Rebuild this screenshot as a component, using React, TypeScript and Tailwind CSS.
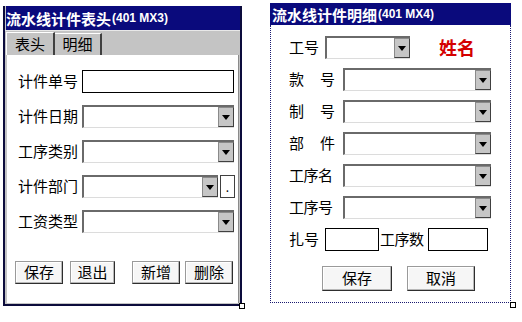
import React from "react"

const cjk = { fontFamily: '"Noto Sans CJK SC", "Noto Sans", sans-serif' }
const latin = { fontFamily: '"Liberation Sans", Arial, sans-serif' }

function Arrow() {
  return (
    <svg width="8" height="5" viewBox="0 0 8 5">
      <polygon points="0,0 8,0 4,5" fill="#000" />
    </svg>
  )
}

function Combo({ className }: { className: string }) {
  return (
    <div
      className={`flex h-[23px] bg-white border-t-2 border-l-2 border-t-[#6a6a6a] border-l-[#6a6a6a] border-b border-b-[#dcdcdc] ${className}`}
    >
      <div className="flex-1" />
      <div className="flex w-[16px] items-center justify-center bg-[#c6c6c6] border border-[#8a8a8a] border-r-[#404040] border-b-[#404040]">
        <Arrow />
      </div>
    </div>
  )
}

function Btn({ label, className }: { label: string; className: string }) {
  return (
    <div
      className={`flex items-center justify-center bg-[#f6f6f6] border border-[#9a9a9a] border-r-[#2e2e2e] border-b-[#2e2e2e] shadow-[inset_-1px_-1px_0_#b8b8b8,inset_1px_1px_0_#ffffff] text-[15px] text-black ${className}`}
    >
      {label}
    </div>
  )
}

function Title({ zh, code }: { zh: string; code: string }) {
  return (
    <div className="flex items-center bg-[#0a0a7c] text-white">
      <span className="text-[15px] font-bold leading-none" style={cjk}>
        {zh}
      </span>
      <span className="ml-[1px] text-[12px] font-bold leading-none" style={latin}>
        {code}
      </span>
    </div>
  )
}

const leftRows = ["计件日期", "工序类别"]

function Handle() {
  return <div className="absolute -right-[5px] -bottom-[5px] h-[6px] w-[6px] border border-black bg-white" />
}

export default function App() {
  return (
    <div className="flex h-[322px] w-[522px] items-start bg-white text-black" style={cjk}>
      {/* 表头 window */}
      <div className="relative ml-[3px] mt-[6px] flex h-[300px] w-[239px] flex-col border-x-2 border-b-2 border-[#0c0c3c] bg-[#c4c4c4]">
        <div className="h-[24px] pl-[1px] [&>div]:h-full">
          <Title zh="流水线计件表头" code="(401 MX3)" />
        </div>
        <div className="flex h-[25px] items-end border-t border-[#e8e8e8] pl-[1px]">
          <div className="flex h-[23px] w-[49px] items-center justify-center border-l border-t border-white border-r-2 border-r-[#404040] bg-[#c4c4c4] text-[15px]">
            表头
          </div>
          <div className="flex h-[22px] w-[47px] items-center justify-center border-t border-white border-r-2 border-r-[#404040] text-[15px]">
            明细
          </div>
        </div>
        <div className="mb-[1px] ml-[2px] mr-[1px] flex flex-1 flex-col border-l border-white border-r border-r-[#8a8a8a] bg-white pl-[10px] pt-[15px]">
          <div className="flex flex-col gap-[12px]">
            <div className="flex h-[23px] items-center">
              <span className="w-[64px] text-[15px]">计件单号</span>
              <div className="h-[23px] w-[152px] border border-black bg-white" />
            </div>
            {leftRows.map((l) => (
              <div key={l} className="flex h-[23px] items-center">
                <span className="w-[64px] text-[15px]">{l}</span>
                <Combo className="w-[152px]" />
              </div>
            ))}
            <div className="flex h-[23px] items-center">
              <span className="w-[64px] text-[15px]">计件部门</span>
              <Combo className="w-[136px]" />
              <div className="ml-[2px] flex h-[23px] w-[15px] items-center justify-center border border-[#404040] bg-white text-[12px] leading-none">
                .
              </div>
            </div>
            <div className="flex h-[23px] items-center">
              <span className="w-[64px] text-[15px]">工资类型</span>
              <Combo className="w-[152px]" />
            </div>
          </div>
          <div className="mt-[28px] flex h-[23px] -ml-[3px]">
            <Btn label="保存" className="w-[48px]" />
            <Btn label="退出" className="ml-[7px] w-[45px]" />
            <Btn label="新增" className="ml-[17px] w-[48px]" />
            <Btn label="删除" className="ml-[5px] w-[48px]" />
          </div>
        </div>
        <Handle />
      </div>

      {/* 明细 window */}
      <div className="relative ml-[28px] mt-[3px] flex h-[300px] w-[241px] flex-col">
        <div className="h-[22px] pl-[2px] bg-[#0a0a7c] [&>div]:h-full">
          <Title zh="流水线计件明细" code="(401 MX4)" />
        </div>
        <div className="flex flex-1 flex-col border-x border-b border-dotted border-[#1a1a70] bg-white pl-[18px] pt-[11px]">
          <div className="flex flex-col gap-[9px]">
            <div className="flex h-[23px] items-center">
              <span className="w-[30px] text-[15px]">工号</span>
              <Combo className="ml-[6px] w-[85px]" />
              <span className="ml-[29px] text-[18px] font-bold text-[#d40000]">姓名</span>
            </div>
            {[
              ["款", "号"],
              ["制", "号"],
              ["部", "件"],
            ].map(([a, b]) => (
              <div key={a} className="flex h-[23px] items-center">
                <span className="flex w-[46px] justify-between text-[15px]">
                  <span>{a}</span>
                  <span>{b}</span>
                </span>
                <Combo className="ml-[8px] w-[148px]" />
              </div>
            ))}
            {["工序名", "工序号"].map((l) => (
              <div key={l} className="flex h-[23px] items-center">
                <span className="w-[46px] text-[15px] tracking-[-0.5px]">{l}</span>
                <Combo className="ml-[8px] w-[148px]" />
              </div>
            ))}
            <div className="flex h-[23px] items-center">
              <span className="w-[30px] text-[15px]">扎号</span>
              <div className="ml-[6px] h-[23px] w-[54px] border border-black bg-white" />
              <span className="ml-[1px] w-[48px] text-[15px] tracking-[-0.5px]">工序数</span>
              <div className="h-[23px] w-[60px] border border-black bg-white" />
            </div>
          </div>
          <div className="mt-[15px] flex h-[25px] pl-[33px]">
            <Btn label="保存" className="w-[70px]" />
            <Btn label="取消" className="ml-[15px] w-[68px]" />
          </div>
        </div>
        <Handle />
      </div>
    </div>
  )
}
